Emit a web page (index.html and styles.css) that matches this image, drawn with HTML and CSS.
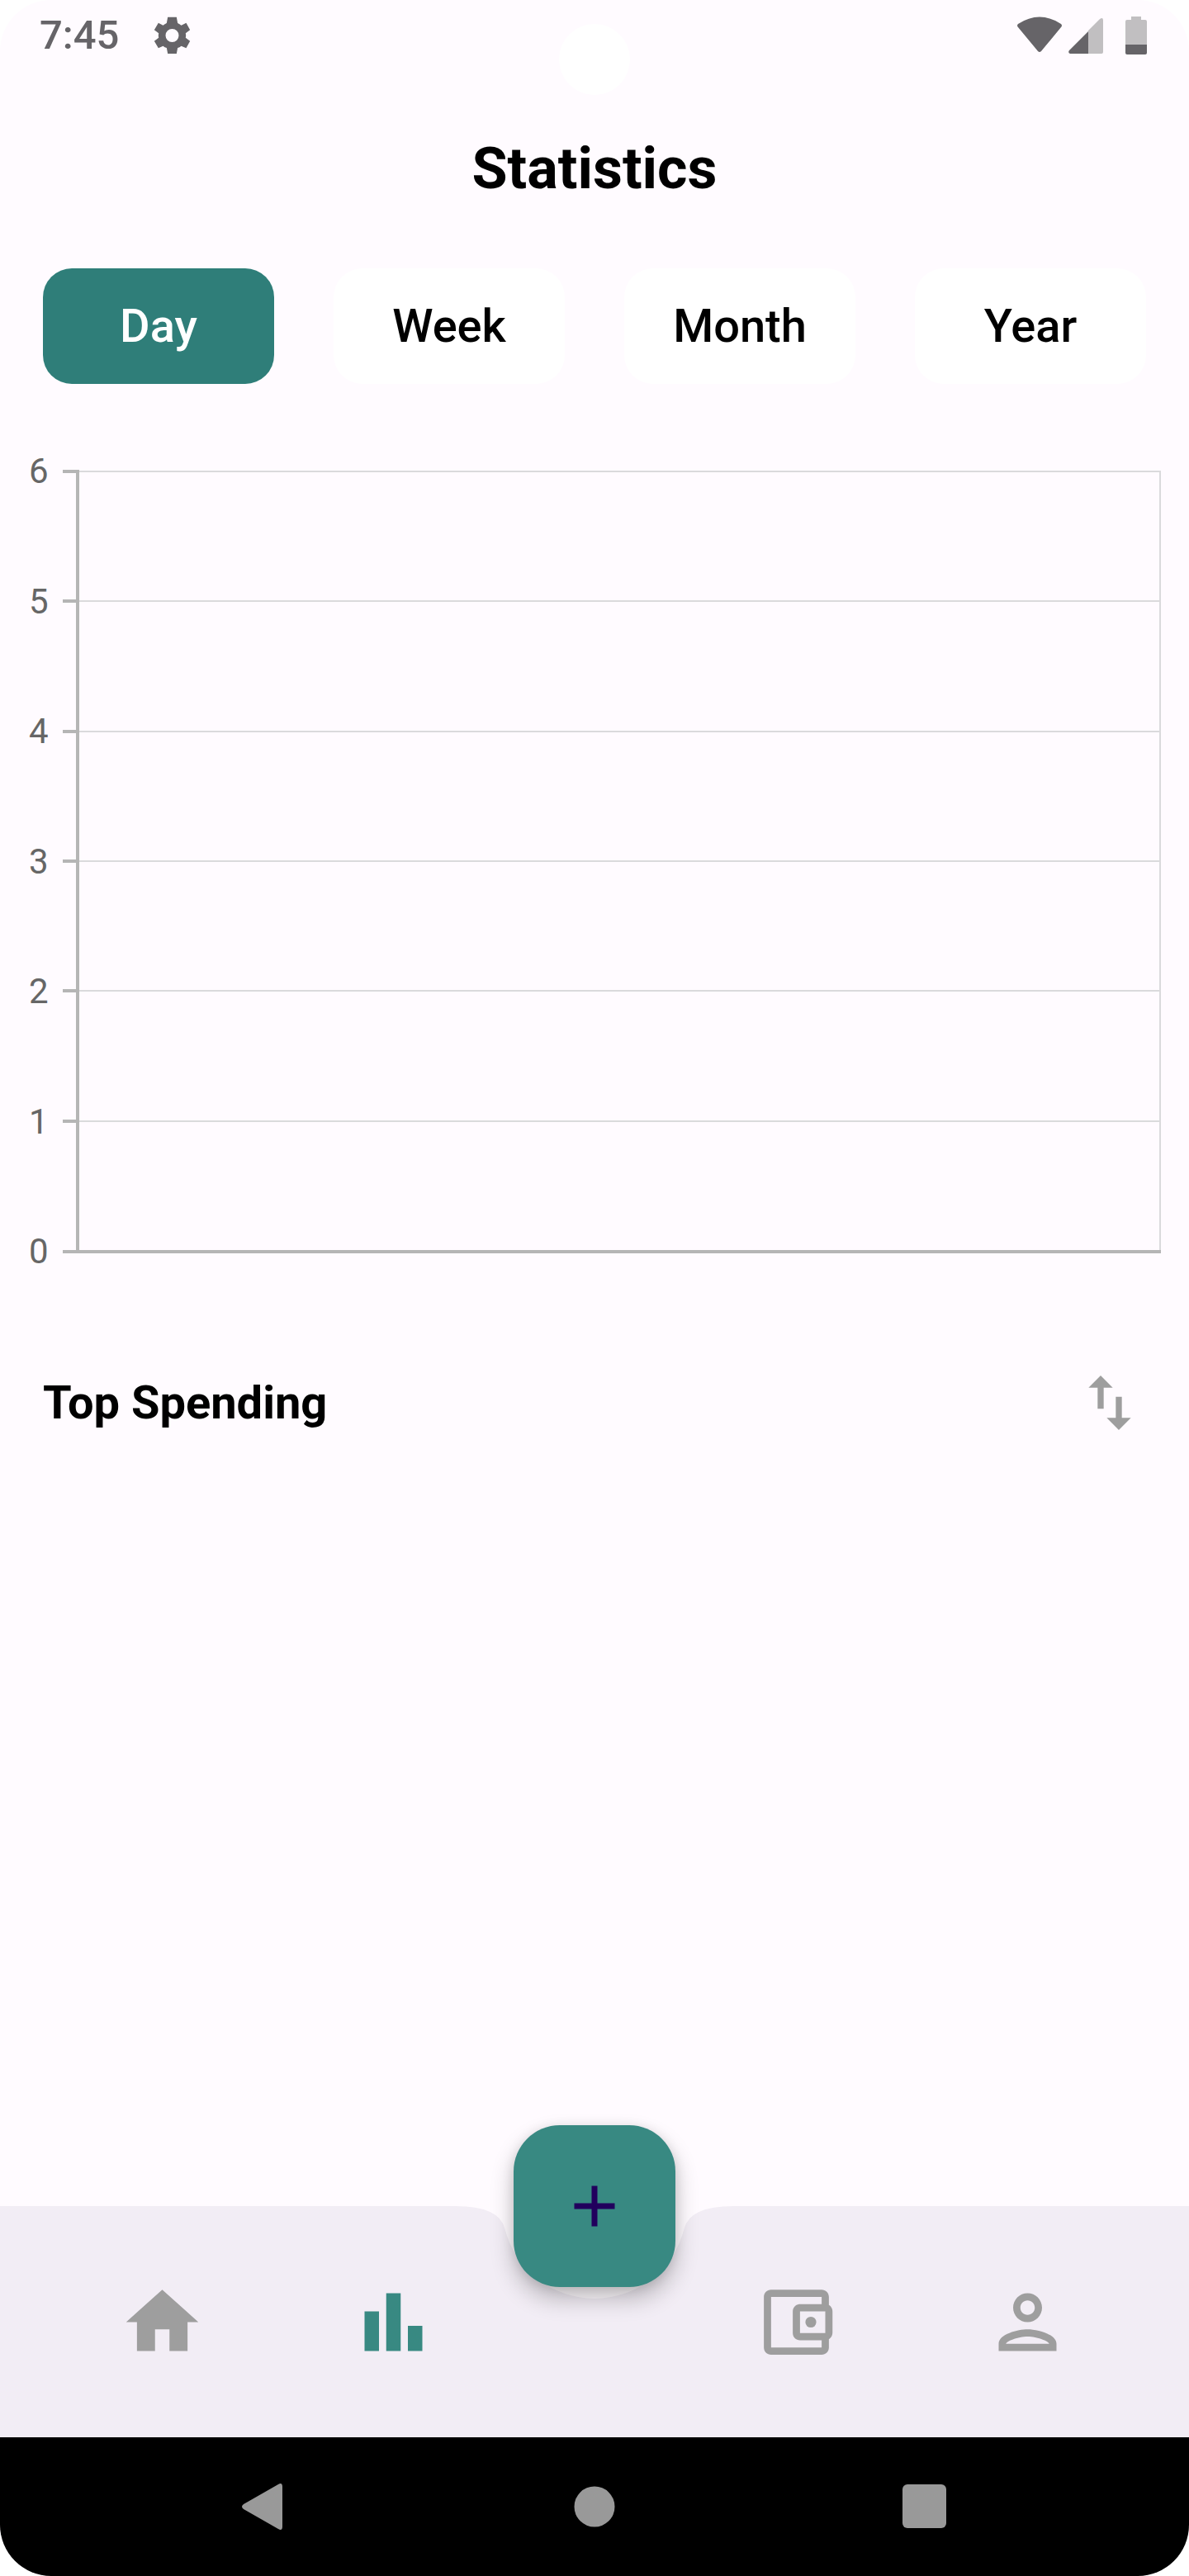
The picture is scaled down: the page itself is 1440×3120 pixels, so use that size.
FILE: index.html
```html
<!DOCTYPE html>
<html lang="en">
<head>
  <meta charset="utf-8">
  <meta name="viewport" content="width=device-width, initial-scale=1">
  <title>Statistics</title>
  <link rel="stylesheet" href="styles.css">
</head>
<body>
  <div class="phone">
    <header class="status-bar">
      <div class="status-group">
        <time class="clock">7:45</time>
        <svg class="status-gear" viewBox="561 58 134 138" aria-hidden="true">
          <path fill-rule="evenodd" d="M612 60H644L648 82Q655 85 661 90L679 81L693 107L677 119Q679 127 677 135L693 147L679 173L661 165Q655 170 648 172L644 193H612L608 172Q601 170 595 165L578 173L563 147L579 135Q577 127 579 119L563 107L578 81L595 90Q601 85 608 82ZM628 103a24 24 0 1 0 0 48a24 24 0 1 0 0-48Z"/>
        </svg>
      </div>
      <div class="status-group status-icons">
        <svg class="status-wifi" viewBox="0 0 54 46" aria-hidden="true">
          <path d="M1 9Q27-8 53 9Q55 11 53 13L29 42Q27 44 25 42L1 13Q-1 11 1 9Z"/>
        </svg>
        <svg class="status-signal" viewBox="0 0 42 46" aria-hidden="true">
          <path class="dim" d="M24 17L38 3Q42 0 42 5V43Q42 45 40 45H24Z"/>
          <path d="M24 18V45H2Q-1 44 1 41Z"/>
        </svg>
        <svg class="status-battery" viewBox="0 0 26 46" aria-hidden="true">
          <path class="dim" d="M7 0H19V4H24Q26 4 26 6V34H0V6Q0 4 2 4H7Z"/>
          <path d="M0 34H26V44Q26 46 24 46H2Q0 46 0 44Z"/>
        </svg>
      </div>
      <span class="camera"></span>
    </header>

    <main class="content">
      <h1 class="title">Statistics</h1>

      <div class="periods">
        <button class="period period-active" type="button">Day</button>
        <button class="period" type="button">Week</button>
        <button class="period" type="button">Month</button>
        <button class="period" type="button">Year</button>
      </div>

      <section class="chart" aria-label="Spending chart">
        <ol class="axis-labels">
          <li>6</li><li>5</li><li>4</li><li>3</li><li>2</li><li>1</li><li>0</li>
        </ol>
        <div class="plot">
          <div class="band"></div>
          <div class="band"></div>
          <div class="band"></div>
          <div class="band"></div>
          <div class="band"></div>
          <div class="band"></div>
        </div>
      </section>

      <div class="section-head">
        <h2 class="section-title">Top Spending</h2>
        <button class="sort" type="button" aria-label="Sort">
          <svg class="sort-icon" viewBox="0 0 24 24" aria-hidden="true"><path d="M16 17.01V10h-2v7.01h-3L15 21l4-3.99h-3zM9 3L5 6.99h3V14h2V6.99h3L9 3z"/></svg>
        </button>
      </div>
    </main>

    <nav class="app-bar">
      <svg class="notch" viewBox="0 0 336 112" aria-hidden="true"><path d="M0 0Q52.500 0 59.400 27.300A112 112 0 0 0 276.600 27.300Q283.500 0 336 0Z"/></svg>
      <a class="tab" href="#home" aria-label="Home">
        <svg class="tab-icon" viewBox="0 0 24 24" aria-hidden="true"><path d="M10 20v-6h4v6h5v-8h3L12 3 2 12h3v8z"/></svg>
      </a>
      <a class="tab tab-active" href="#statistics" aria-label="Statistics">
        <svg class="tab-icon" viewBox="0 0 24 24" aria-hidden="true"><path d="M4 9h4v11H4zM16 13h4v7h-4zM10 4h4v16h-4z"/></svg>
      </a>
      <a class="tab tab-after-gap" href="#wallet" aria-label="Wallet">
        <svg class="tab-icon" viewBox="0 0 24 24" aria-hidden="true"><path d="M21 7.280V5c0-1.100-.9-2-2-2H5c-1.110 0-2 .9-2 2v14c0 1.100.89 2 2 2h14c1.100 0 2-.9 2-2v-2.280c.59-.35 1-.98 1-1.720V9c0-.74-.41-1.380-1-1.720zM20 9v6h-7V9h7zM5 19V5h14v2h-6c-1.100 0-2 .9-2 2v6c0 1.100.9 2 2 2h6v2H5z"/><circle cx="16" cy="12" r="1.500"/></svg>
      </a>
      <a class="tab" href="#profile" aria-label="Profile">
        <svg class="tab-icon" viewBox="0 0 24 24" aria-hidden="true"><path d="M12 6c1.100 0 2 .9 2 2s-.9 2-2 2-2-.9-2-2 .9-2 2-2m0 10c2.700 0 5.800 1.290 6 2H6c.23-.72 3.310-2 6-2m0-12C9.790 4 8 5.790 8 8s1.790 4 4 4 4-1.790 4-4-1.790-4-4-4zm0 10c-2.670 0-8 1.340-8 4v2h16v-2c0-2.660-5.330-4-8-4z"/></svg>
      </a>
      <button class="add" type="button" aria-label="Add">
        <svg class="add-icon" viewBox="0 0 24 24" aria-hidden="true"><path d="M19 13h-6v6h-2v-6H5v-2h6V5h2v6h6z"/></svg>
      </button>
    </nav>

    <footer class="system-bar">
      <button class="system-key" type="button" aria-label="Back">
        <svg class="system-icon" viewBox="0 0 56 56" aria-hidden="true"><path d="M45 1Q50-2 50 4V52Q50 58 45 55L3 31Q-1 28 3 25Z"/></svg>
      </button>
      <button class="system-key" type="button" aria-label="Home screen">
        <svg class="system-icon" viewBox="0 0 56 56" aria-hidden="true"><circle cx="28" cy="28" r="24.500"/></svg>
      </button>
      <button class="system-key" type="button" aria-label="Recent apps">
        <svg class="system-icon" viewBox="0 0 56 56" aria-hidden="true"><rect x="1" y="1" width="53" height="53" rx="6"/></svg>
      </button>
    </footer>
  </div>
</body>
</html>
```

FILE: styles.css
```css
:root {
  --page: #fffbff;
  --bar: #f2edf5;
  --teal: #388982;
  --teal-dark: #2f7e79;
  --status: #666468;
  --muted: #9e9e9e;
  --axis: #b5b5b5;
  --grid: #dadadc;
}

* {
  box-sizing: border-box;
}

body {
  margin: 0;
  background: #fff;
  color: #000;
  font-family: Roboto, "Liberation Sans", sans-serif;
}

button {
  border: 0;
  padding: 0;
  background: none;
  color: inherit;
  font: inherit;
}

svg {
  display: block;
  flex: none;
}

.phone {
  display: flex;
  flex-direction: column;
  min-height: 100vh;
  border-radius: 62px;
  background: var(--page);
  overflow: hidden;
}

/* Status bar */
.status-bar {
  position: relative;
  display: flex;
  align-items: center;
  justify-content: space-between;
  height: 86px;
  padding: 0 51px 0 48px;
  fill: var(--status);
  color: var(--status);
}

.status-group {
  display: flex;
  align-items: center;
}

.clock {
  margin-right: 42px;
  font-size: 49px;
  font-weight: 500;
  line-height: 86px;
}

.status-gear {
  width: 45px;
  height: 46px;
}

.status-icons {
  gap: 8px;
}

.status-wifi {
  width: 54px;
  height: 46px;
}

.status-signal {
  width: 42px;
  height: 46px;
}

.status-battery {
  width: 26px;
  height: 46px;
  margin-left: 19px;
}

.dim {
  fill: #c1bfc1;
}

.camera {
  position: absolute;
  top: 29px;
  left: 50%;
  width: 86px;
  height: 86px;
  margin-left: -43px;
  border-radius: 50%;
  background: #fff;
}

/* Page content */
.content {
  flex: 1;
}

.title {
  margin: 76px 0 79px;
  font-size: 70px;
  font-weight: 700;
  line-height: 84px;
  text-align: center;
}

.periods {
  display: flex;
  justify-content: space-between;
  padding: 0 52px;
}

.period {
  width: 280px;
  height: 140px;
  border-radius: 35px;
  background: #fff;
  font-size: 56px;
  font-weight: 500;
  line-height: 68px;
}

.period-active {
  background: var(--teal-dark);
  color: #fff;
}

/* Chart */
.chart {
  display: flex;
  margin-top: 81px;
  padding: 0 34px 0 35px;
}

.axis-labels {
  display: flex;
  flex-direction: column;
  justify-content: space-between;
  height: 995px;
  margin: 0 17px 0 0;
  padding: 0;
  list-style: none;
  color: #666;
  font-size: 42px;
  line-height: 50px;
}

.plot {
  display: flex;
  flex: 1;
  flex-direction: column;
  margin: 24px 0 23px;
  padding-left: 16px;
  border-bottom: 4px solid var(--axis);
}

.band {
  position: relative;
  flex: 1;
  border-top: 2px solid var(--grid);
  border-right: 2px solid var(--grid);
  border-left: 4px solid var(--axis);
}

.band::before {
  position: absolute;
  top: -3px;
  left: -20px;
  width: 20px;
  height: 4px;
  background: var(--axis);
  content: "";
}

/* Top spending */
.section-head {
  display: flex;
  align-items: center;
  justify-content: space-between;
  margin-top: 114px;
  padding: 0 52px;
}

.section-title {
  margin: 0;
  font-size: 56px;
  font-weight: 700;
  line-height: 68px;
}

.sort-icon {
  width: 88px;
  height: 88px;
  fill: var(--muted);
}

/* Bottom app bar */
.app-bar {
  position: relative;
  display: grid;
  grid-template-columns: 1fr 1fr 208px 1fr 1fr;
  height: 280px;
  padding: 0 56px;
  background: var(--bar);
}

.notch {
  position: absolute;
  top: 0;
  left: 50%;
  width: 336px;
  height: 112px;
  margin-left: -168px;
  fill: var(--page);
}

.tab {
  display: flex;
  align-items: center;
  justify-content: center;
  fill: var(--muted);
}

.tab-active {
  fill: var(--teal);
}

.tab-after-gap {
  grid-column: 4;
}

.tab-icon {
  width: 105px;
  height: 105px;
}

.add {
  position: absolute;
  top: -98px;
  left: 50%;
  display: flex;
  align-items: center;
  justify-content: center;
  width: 196px;
  height: 196px;
  margin-left: -98px;
  border-radius: 56px;
  background: var(--teal);
  box-shadow: 0 14px 28px rgba(0, 0, 0, 0.24), 0 2px 14px rgba(0, 0, 0, 0.1);
  fill: #21005d;
}

.add-icon {
  width: 84px;
  height: 84px;
}

/* System navigation */
.system-bar {
  display: grid;
  grid-template-columns: repeat(3, 1fr);
  height: 168px;
  padding: 0 120px;
  background: #000;
}

.system-key {
  display: flex;
  align-items: center;
  justify-content: center;
}

.system-icon {
  width: 56px;
  height: 56px;
  fill: #999;
}
```
